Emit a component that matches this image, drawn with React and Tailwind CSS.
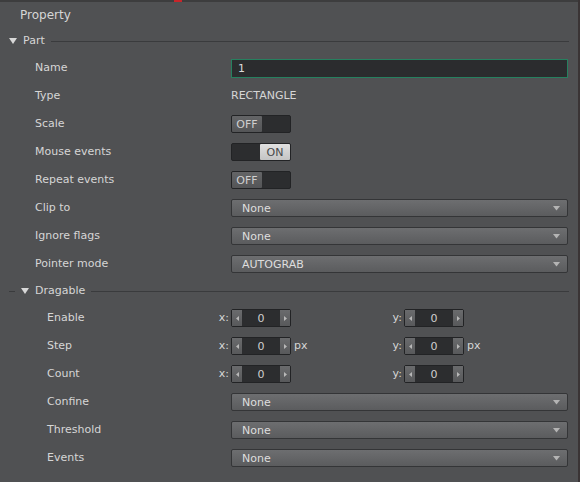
import React from "react";

const font = { fontFamily: '"DejaVu Sans", "Liberation Sans", sans-serif' };

function Header({ title, indent }) {
  return (
    <div className="flex items-center h-[26px] pl-[9px] pr-[9px]">
      {indent && <div className="w-[6px] h-px bg-[#3a3b3d] mr-[6px]" />}
      <svg width="8" height="6" viewBox="0 0 8 6" className="mr-[6px]">
        <polygon points="0,0 8,0 4,6" fill="#d8d8d8" />
      </svg>
      <span className="text-[11px] text-[#d6d6d6]">{title}</span>
      <div className="flex-1 h-px bg-[#3a3b3d] ml-[6px]" />
    </div>
  );
}

function Row({ label, deep, children }) {
  return (
    <div className="flex items-center h-[28px]">
      <div className={`${deep ? "pl-[47px]" : "pl-[35px]"} w-[231px] text-[11px] text-[#d6d6d6] shrink-0`}>
        {label}
      </div>
      <div className="flex-1 flex items-center pr-[10px]">{children}</div>
    </div>
  );
}

function Dropdown({ value }) {
  return (
    <div className="flex-1 h-[18px] flex items-center rounded-[2px] border border-[#343537] bg-gradient-to-b from-[#6d6e70] to-[#5b5c5e] pl-[10px] pr-[7px]">
      <span className="flex-1 text-[11px] text-[#dedede] leading-none">{value}</span>
      <svg width="7" height="5" viewBox="0 0 7 5">
        <polygon points="0,0 7,0 3.5,4.5" fill="#b4b4b4" />
      </svg>
    </div>
  );
}

function Toggle({ on }) {
  return (
    <div className="w-[60px] h-[18px] rounded-[2px] border border-[#222325] bg-[#2c2d2f] flex items-stretch">
      {on ? (
        <>
          <div className="flex-1" />
          <div className="w-[30px] rounded-[1px] bg-gradient-to-b from-[#e0e0e0] to-[#c4c4c4] flex items-center justify-center text-[11px] text-[#474849] leading-none">
            ON
          </div>
        </>
      ) : (
        <>
          <div className="w-[30px] rounded-[1px] bg-gradient-to-b from-[#646567] to-[#545557] flex items-center justify-center text-[11px] text-[#d0d0d0] leading-none">
            OFF
          </div>
          <div className="flex-1" />
        </>
      )}
    </div>
  );
}

function Spinner() {
  return (
    <div className="w-[60px] h-[18px] rounded-[2px] border border-[#222325] bg-[#2c2d2f] flex items-stretch">
      <div className="w-[10px] bg-gradient-to-b from-[#6a6b6d] to-[#58595b] flex items-center justify-center">
        <svg width="3" height="5" viewBox="0 0 3 5"><polygon points="3,0 3,5 0,2.5" fill="#b8b8b8" /></svg>
      </div>
      <div className="flex-1 flex items-center justify-center text-[11px] text-[#d0d0d0] leading-none">0</div>
      <div className="w-[10px] bg-gradient-to-b from-[#6a6b6d] to-[#58595b] flex items-center justify-center">
        <svg width="3" height="5" viewBox="0 0 3 5"><polygon points="0,0 0,5 3,2.5" fill="#b8b8b8" /></svg>
      </div>
    </div>
  );
}

function XYRow({ label, px }) {
  return (
    <div className="flex items-center h-[28px]">
      <div className="w-[217px] pl-[47px] shrink-0 text-[11px] text-[#d6d6d6]">{label}</div>
      <div className="w-[173px] flex items-center shrink-0">
        <span className="w-[14px] text-[11px] text-[#d6d6d6] text-right pr-[2px]">x:</span>
        <Spinner />
        {px && <span className="ml-[3px] text-[11px] text-[#d6d6d6]">px</span>}
      </div>
      <div className="flex items-center">
        <span className="w-[14px] text-[11px] text-[#d6d6d6] text-right pr-[2px]">y:</span>
        <Spinner />
        {px && <span className="ml-[3px] text-[11px] text-[#d6d6d6]">px</span>}
      </div>
    </div>
  );
}

export default function App() {
  return (
    <div style={font} className="w-[580px] h-[482px] bg-[#505153] flex overflow-hidden">
      <div className="flex-1 flex flex-col">
        <div className="h-[2px] bg-[#3d3d3e] flex">
          <div className="ml-[174px] w-[8px] bg-[#c8252a]" />
        </div>
        <div className="h-[26px] flex items-center pl-[20px] text-[12px] text-[#d6d6d6]">Property</div>
        <Header title="Part" />
        <Row label="Name">
          <div className="flex-1 h-[19px] flex items-center border border-[#26805f] bg-[#2b2c2e] pl-[6px] text-[11px] text-[#dcdcdc] leading-none">
            1
          </div>
        </Row>
        <Row label="Type">
          <span className="text-[11px] text-[#d6d6d6]">RECTANGLE</span>
        </Row>
        <Row label="Scale"><Toggle /></Row>
        <Row label="Mouse events"><Toggle on /></Row>
        <Row label="Repeat events"><Toggle /></Row>
        <Row label="Clip to"><Dropdown value="None" /></Row>
        <Row label="Ignore flags"><Dropdown value="None" /></Row>
        <Row label="Pointer mode"><Dropdown value="AUTOGRAB" /></Row>
        <Header title="Dragable" indent />
        <XYRow label="Enable" />
        <XYRow label="Step" px />
        <XYRow label="Count" />
        <Row label="Confine" deep><Dropdown value="None" /></Row>
        <Row label="Threshold" deep><Dropdown value="None" /></Row>
        <Row label="Events" deep><Dropdown value="None" /></Row>
      </div>
      <div className="w-[2px] bg-[#3a3435]" />
    </div>
  );
}
